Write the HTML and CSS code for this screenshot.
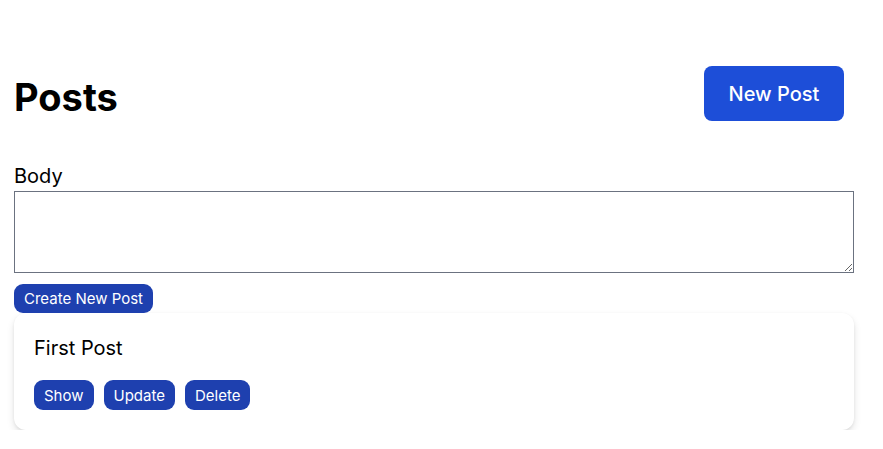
FILE: index.html
```html
<!DOCTYPE html>
<html lang="en">
<head>
    <meta charset="UTF-8">
    <meta name="viewport" content="width=device-width, initial-scale=1.0">
    <title>Posts</title>
    <link rel="stylesheet" href="styles.css">
</head>
<body>
    <div class="page">
        <div class="header">
            <h1>Posts</h1>
            <button class="new-post">New Post</button>
        </div>

        <form class="post-form">
            <label for="body">Body</label>
            <textarea id="body" name="body"></textarea>
            <button type="button" class="btn">Create New Post</button>
        </form>

        <div class="post-card">
            <p class="post-title">First Post</p>
            <div class="actions">
                <button class="btn">Show</button>
                <button class="btn">Update</button>
                <button class="btn">Delete</button>
            </div>
        </div>
    </div>
</body>
</html>
```

FILE: styles.css
```css
body {
    font-family: Inter, "Noto Sans", sans-serif;
    margin: 0;
    padding: 0;
    background-color: #fff;
    color: #000;
}
.page {
    width: 840px;
    padding: 0 14px;
}
.header {
    display: flex;
    justify-content: space-between;
    align-items: flex-start;
    padding-top: 66px;
}
h1 {
    font-size: 38px;
    font-weight: 700;
    margin: 0;
    line-height: 48px;
    padding-top: 7px;
}
.new-post {
    font-family: inherit;
    font-size: 20px;
    font-weight: 500;
    color: #fff;
    background-color: #1d4ed8;
    border: none;
    border-radius: 8px;
    width: 140px;
    height: 55px;
    margin-right: 10px;
    cursor: pointer;
}
.post-form {
    display: flex;
    flex-direction: column;
    align-items: flex-start;
    margin-top: 41px;
}
.post-form label {
    font-size: 20px;
    line-height: 28px;
    margin-bottom: 1px;
}
.post-form textarea {
    box-sizing: border-box;
    width: 840px;
    height: 82px;
    border: 1px solid #6b7280;
    margin: 0 0 11px;
    font-family: inherit;
}
.btn {
    font-family: inherit;
    font-size: 15px;
    color: #fff;
    background-color: #1e40af;
    border: none;
    border-radius: 9px;
    height: 29px;
    padding: 0 10px;
    cursor: pointer;
}
.post-card {
    background-color: #fff;
    border-radius: 12px;
    box-shadow: 0 4px 8px -1px rgba(0, 0, 0, 0.14), 0 1px 3px rgba(0, 0, 0, 0.06);
    padding: 21px 20px 20px;
}
.post-title {
    font-size: 20px;
    margin: 0 0 18px;
    line-height: 28px;
}
.actions {
    display: flex;
    gap: 10px;
}
.actions .btn {
    height: 30px;
}
```
